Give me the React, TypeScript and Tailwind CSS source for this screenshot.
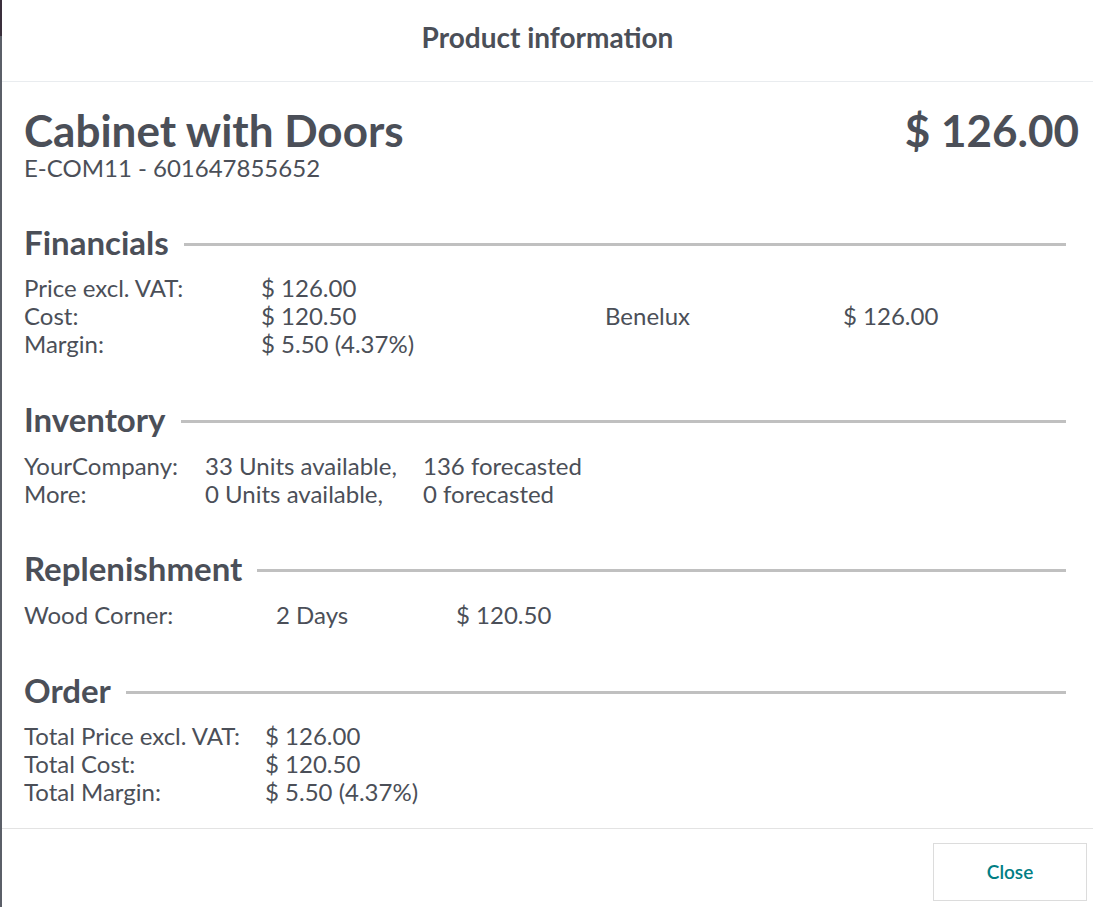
import React from "react";

const Section = ({ title }: { title: string }) => (
  <div className="flex items-center pr-[13px]">
    <div className="text-[33px] font-bold leading-[40px]">{title}</div>
    <div className="ml-[15px] mt-[4px] h-[3px] flex-1 bg-[#c0c0c0]" />
  </div>
);

export default function App() {
  return (
    <div
      className="relative flex h-[907px] w-[1093px] overflow-hidden bg-white text-[#4b4f58]"
      style={{ fontFamily: "Lato, 'Noto Sans', sans-serif" }}
    >
      <div className="flex w-[2px] flex-col">
        <div className="h-[36px] bg-[#3a2f3c]" />
        <div className="flex-1 bg-[#5b5f68]" />
      </div>
      <div className="flex flex-1 flex-col">
        <div className="flex h-[82px] items-center justify-center border-b border-[#e9ecef]">
          <div className="text-[28px] font-bold text-[#4b4f58] -mt-[8px]">Product information</div>
        </div>
        <div className="flex-1 pl-[22px] pr-[14px]">
          <div className="mt-[24px] flex items-start justify-between">
            <div>
              <div className="text-[44px] font-bold leading-[48px]">Cabinet with Doors</div>
              <div className="text-[24px] leading-[28px]">E-COM11 - 601647855652</div>
            </div>
            <div className="text-[44px] font-bold leading-[48px]">$ 126.00</div>
          </div>

          <div className="mt-[40px]">
            <Section title="Financials" />
            <div className="mt-[12px] flex text-[24px] leading-[28px]">
              <div className="grid grid-cols-[237px_auto] w-[581px]">
                <div>Price excl. VAT:</div>
                <div>$ 126.00</div>
                <div>Cost:</div>
                <div>$ 120.50</div>
                <div>Margin:</div>
                <div>$ 5.50 (4.37%)</div>
              </div>
              <div className="grid grid-cols-[238px_auto] self-center">
                <div>Benelux</div>
                <div>$ 126.00</div>
              </div>
            </div>
          </div>

          <div className="mt-[41px]">
            <Section title="Inventory" />
            <div className="mt-[13px] grid grid-cols-[181px_218px_auto] text-[24px] leading-[28px]">
              <div>YourCompany:</div>
              <div>33 Units available,</div>
              <div>136 forecasted</div>
              <div>More:</div>
              <div>0 Units available,</div>
              <div>0 forecasted</div>
            </div>
          </div>

          <div className="mt-[40px]">
            <Section title="Replenishment" />
            <div className="mt-[13px] grid grid-cols-[252px_180px_auto] text-[24px] leading-[28px]">
              <div>Wood Corner:</div>
              <div>2 Days</div>
              <div>$ 120.50</div>
            </div>
          </div>

          <div className="mt-[41px]">
            <Section title="Order" />
            <div className="mt-[12px] grid grid-cols-[241px_auto] text-[24px] leading-[28px]">
              <div>Total Price excl. VAT:</div>
              <div>$ 126.00</div>
              <div>Total Cost:</div>
              <div>$ 120.50</div>
              <div>Total Margin:</div>
              <div>$ 5.50 (4.37%)</div>
            </div>
          </div>
        </div>
        <div className="flex h-[79px] items-start justify-end border-t border-[#e3e3e3] pr-[6px] pt-[14px]">
          <button className="flex h-[58px] w-[154px] items-center justify-center border border-[#dcdcdc] bg-white text-[19px] font-semibold text-[#017e84]">
            Close
          </button>
        </div>
      </div>
    </div>
  );
}
